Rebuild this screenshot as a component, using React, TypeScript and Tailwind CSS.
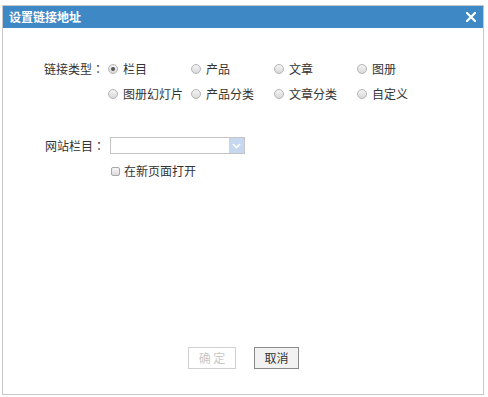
import React from "react";

const font = { fontFamily: '"Noto Sans CJK SC", "Noto Sans", sans-serif' };
const jp = { fontFamily: '"Noto Sans CJK JP", sans-serif' };

function Radio({ label, checked }: { label: string; checked?: boolean }) {
  return (
    <div className="flex w-[83px] items-center gap-[5px]">
      <span className="flex h-[10px] w-[10px] items-center justify-center rounded-full border border-[#b4b4b4] bg-gradient-to-b from-[#f4f4f4] to-[#d9d9d9]">
        {checked && <span className="h-[4px] w-[4px] rounded-full bg-[#555]" />}
      </span>
      <span>{label}</span>
    </div>
  );
}

export default function App() {
  return (
    <div className="h-[397px] w-[488px] bg-white pl-[2px] pt-[5px] text-[12px] text-[#333]" style={font}>
      <div className="flex h-[390px] w-[482px] flex-col border border-[#c8c8c8]">
        <div className="flex h-[22px] shrink-0 items-center justify-between bg-[#3f88c6] pl-[6px] pr-[6px]">
          <span className="text-[12px] font-bold leading-none text-white">设置链接地址</span>
          <svg width="10" height="10" viewBox="0 0 10 10" className="mr-[1px]">
            <path d="M1 1 L9 9 M9 1 L1 9" stroke="white" strokeWidth="2.2" strokeLinecap="square" />
          </svg>
        </div>
        <div className="flex flex-1 flex-col pl-[41px] pt-[28px]">
          <div className="flex">
            <div className="flex h-[25px] w-[64px] items-center">
              链接类型<span style={jp}>：</span>
            </div>
            <div className="flex flex-col">
              <div className="flex h-[25px] items-center">
                <Radio label="栏目" checked />
                <Radio label="产品" />
                <Radio label="文章" />
                <Radio label="图册" />
              </div>
              <div className="flex h-[25px] items-center">
                <Radio label="图册幻灯片" />
                <Radio label="产品分类" />
                <Radio label="文章分类" />
                <Radio label="自定义" />
              </div>
            </div>
          </div>
          <div className="mt-[31px] flex h-[17px] items-center">
            <div className="w-[66px] pl-[1px]">
              网站栏目<span style={jp}>：</span>
            </div>
            <div className="flex h-[17px] w-[135px] items-stretch justify-end border border-[#c4c4c4] bg-white">
              <div className="flex w-[15px] items-center justify-center bg-[#c6d8ef]">
                <svg width="9" height="6" viewBox="0 0 9 6">
                  <path d="M1 1 L4.5 4.5 L8 1" stroke="white" strokeWidth="1.6" fill="none" />
                </svg>
              </div>
            </div>
          </div>
          <div className="ml-[67px] mt-[9px] flex h-[16px] items-center gap-[4px]">
            <span className="h-[9px] w-[9px] rounded-[2px] border border-[#a8a8a8] bg-gradient-to-b from-[#f6f6f6] to-[#dcdcdc]" />
            <span>在新页面打开</span>
          </div>
          <div className="mt-auto mb-[25px] -ml-[41px] flex justify-center gap-[18px] pl-[1px]">
            <button className="h-[22px] w-[48px] border border-[#d0d0d0] bg-white text-[#c8c8c8]">确 定</button>
            <button className="h-[22px] w-[45px] border border-[#8a8a8a] bg-[#f2f2f2] text-[#333]">取消</button>
          </div>
        </div>
      </div>
    </div>
  );
}
